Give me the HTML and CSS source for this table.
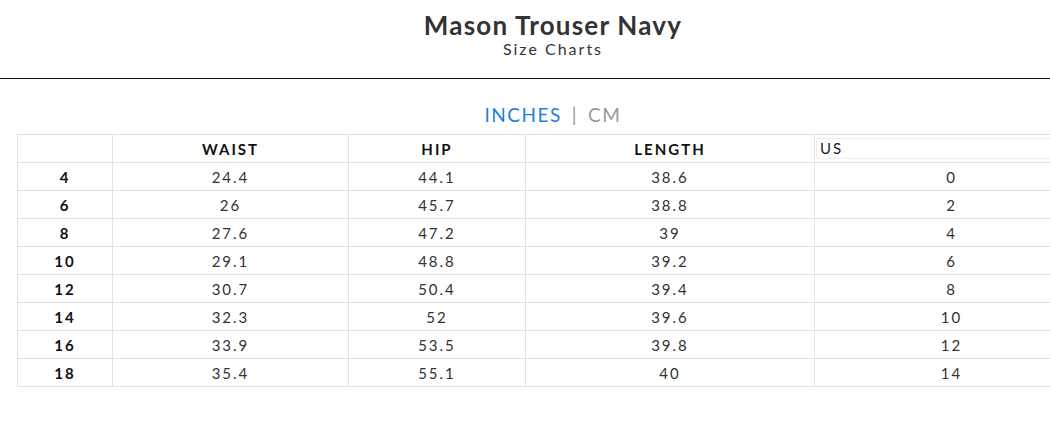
FILE: index.html
```html
<!DOCTYPE html>
<html>
<head>
<meta charset="utf-8">
<link rel="stylesheet" href="styles.css">
</head>
<body>
<div class="page">
  <header class="head">
    <h1 class="title">Mason Trouser Navy</h1>
    <div class="subtitle">Size Charts</div>
  </header>
  <div class="rule"></div>
  <div class="units"><span class="unit active">INCHES</span><span class="sep">|</span><span class="unit">CM</span></div>
  <table class="chart">
    <colgroup>
      <col class="c1"><col class="c2"><col class="c3"><col class="c4"><col class="c5">
    </colgroup>
    <thead>
      <tr><th></th><th>WAIST</th><th>HIP</th><th>LENGTH</th><th class="us"><div class="select">US</div></th></tr>
    </thead>
    <tbody>
      <tr><th>4</th><td>24.4</td><td>44.1</td><td>38.6</td><td>0</td></tr>
      <tr><th>6</th><td>26</td><td>45.7</td><td>38.8</td><td>2</td></tr>
      <tr><th>8</th><td>27.6</td><td>47.2</td><td>39</td><td>4</td></tr>
      <tr><th>10</th><td>29.1</td><td>48.8</td><td>39.2</td><td>6</td></tr>
      <tr><th>12</th><td>30.7</td><td>50.4</td><td>39.4</td><td>8</td></tr>
      <tr><th>14</th><td>32.3</td><td>52</td><td>39.6</td><td>10</td></tr>
      <tr><th>16</th><td>33.9</td><td>53.5</td><td>39.8</td><td>12</td></tr>
      <tr><th>18</th><td>35.4</td><td>55.1</td><td>40</td><td>14</td></tr>
    </tbody>
  </table>
</div>
</body>
</html>
```

FILE: styles.css
```css
html, body {
  margin: 0;
  padding: 0;
  background: #fff;
  overflow: hidden;
}
body {
  font-family: "Lato", "Liberation Sans", sans-serif;
  color: #222;
}
.page {
  width: 1106px;
}
.head {
  text-align: center;
  padding-top: 10px;
}
.title {
  margin: 0;
  font-size: 26px;
  font-weight: 700;
  letter-spacing: 1.2px;
  line-height: 30px;
  color: #333;
}
.subtitle {
  font-size: 16px;
  letter-spacing: 2px;
  line-height: 18px;
  color: #333;
}
.rule {
  margin-top: 20px;
  height: 0;
  border-top: 1.5px solid #111;
}
.units {
  text-align: center;
  margin-top: 24px;
  font-size: 19px;
  letter-spacing: 1.5px;
  line-height: 24px;
  color: #999;
}
.unit.active { color: #1a7fe6; }
.sep { margin: 0 10px; color: #999; }
.chart {
  margin: 7px 17px 0;
  width: 1072px;
  border-collapse: collapse;
  table-layout: fixed;
  font-size: 15px;
  letter-spacing: 2px;
}
.c1 { width: 95px; }
.c2 { width: 236px; }
.c3 { width: 177px; }
.c4 { width: 289px; }
.chart tr { height: 28px; }
.chart th, .chart td {
  border: 1px solid #e2e2e2;
  padding: 0;
  text-align: center;
  vertical-align: middle;
  line-height: 18px;
}
.chart thead th {
  font-weight: 700;
  color: #111;
}
.chart tbody th {
  font-weight: 700;
  color: #111;
}
.chart td {
  font-weight: 400;
  color: #333;
}
.chart th.us {
  text-align: left;
  padding: 0 1px;
}
.select {
  border: 1px solid #eee;
  font-weight: 400;
  color: #222;
  height: 19px;
  line-height: 19px;
  padding-left: 3px;
}
```
